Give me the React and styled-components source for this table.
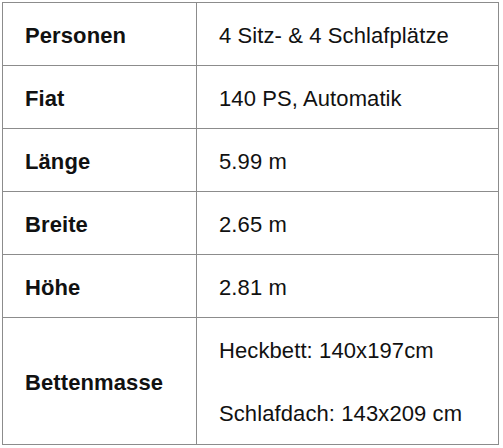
import React from "react";
import styled, { createGlobalStyle } from "styled-components";

const Global = createGlobalStyle`
  html, body { margin: 0; padding: 0; background: #ffffff; }
  body { font-family: "Liberation Sans", Arial, sans-serif; color: #111; }
`;

const Wrap = styled.div`
  padding: 2px 0 0 2px;
`;

const Table = styled.table`
  border-collapse: collapse;
  width: 497px;
  table-layout: fixed;
  font-family: "Liberation Sans", Arial, sans-serif;
  font-size: 22px;
  letter-spacing: 0.1px;
  border: 1px solid #8c8c8c;
`;

const Row = styled.tr`
  height: 63px;
`;

const Cell = styled.td`
  border: 1px solid #8c8c8c;
  padding: ${(p) => (p.$multi ? "0 0 0 22px" : "3px 0 0 22px")};
  vertical-align: middle;
  font-weight: ${(p) => (p.$label ? 700 : 400)};
  color: #111;
  line-height: 24px;
`;

const Line = styled.div`
  height: 63px;
  padding-top: 3px;
  box-sizing: border-box;
  display: flex;
  align-items: center;
`;

const rows = [
  ["Personen", ["4 Sitz- & 4 Schlafplätze"]],
  ["Fiat", ["140 PS, Automatik"]],
  ["Länge", ["5.99 m"]],
  ["Breite", ["2.65 m"]],
  ["Höhe", ["2.81 m"]],
  ["Bettenmasse", ["Heckbett: 140x197cm", "Schlafdach: 143x209 cm"]],
];

export default function App() {
  return (
    <>
      <Global />
      <Wrap>
        <Table>
          <colgroup>
            <col style={{ width: 194 }} />
            <col />
          </colgroup>
          <tbody>
            {rows.map(([label, values]) => (
              <Row key={label}>
                <Cell $label>{label}</Cell>
                {values.length === 1 ? (
                  <Cell>{values[0]}</Cell>
                ) : (
                  <Cell $multi>
                    {values.map((v) => (
                      <Line key={v}>{v}</Line>
                    ))}
                  </Cell>
                )}
              </Row>
            ))}
          </tbody>
        </Table>
      </Wrap>
    </>
  );
}
